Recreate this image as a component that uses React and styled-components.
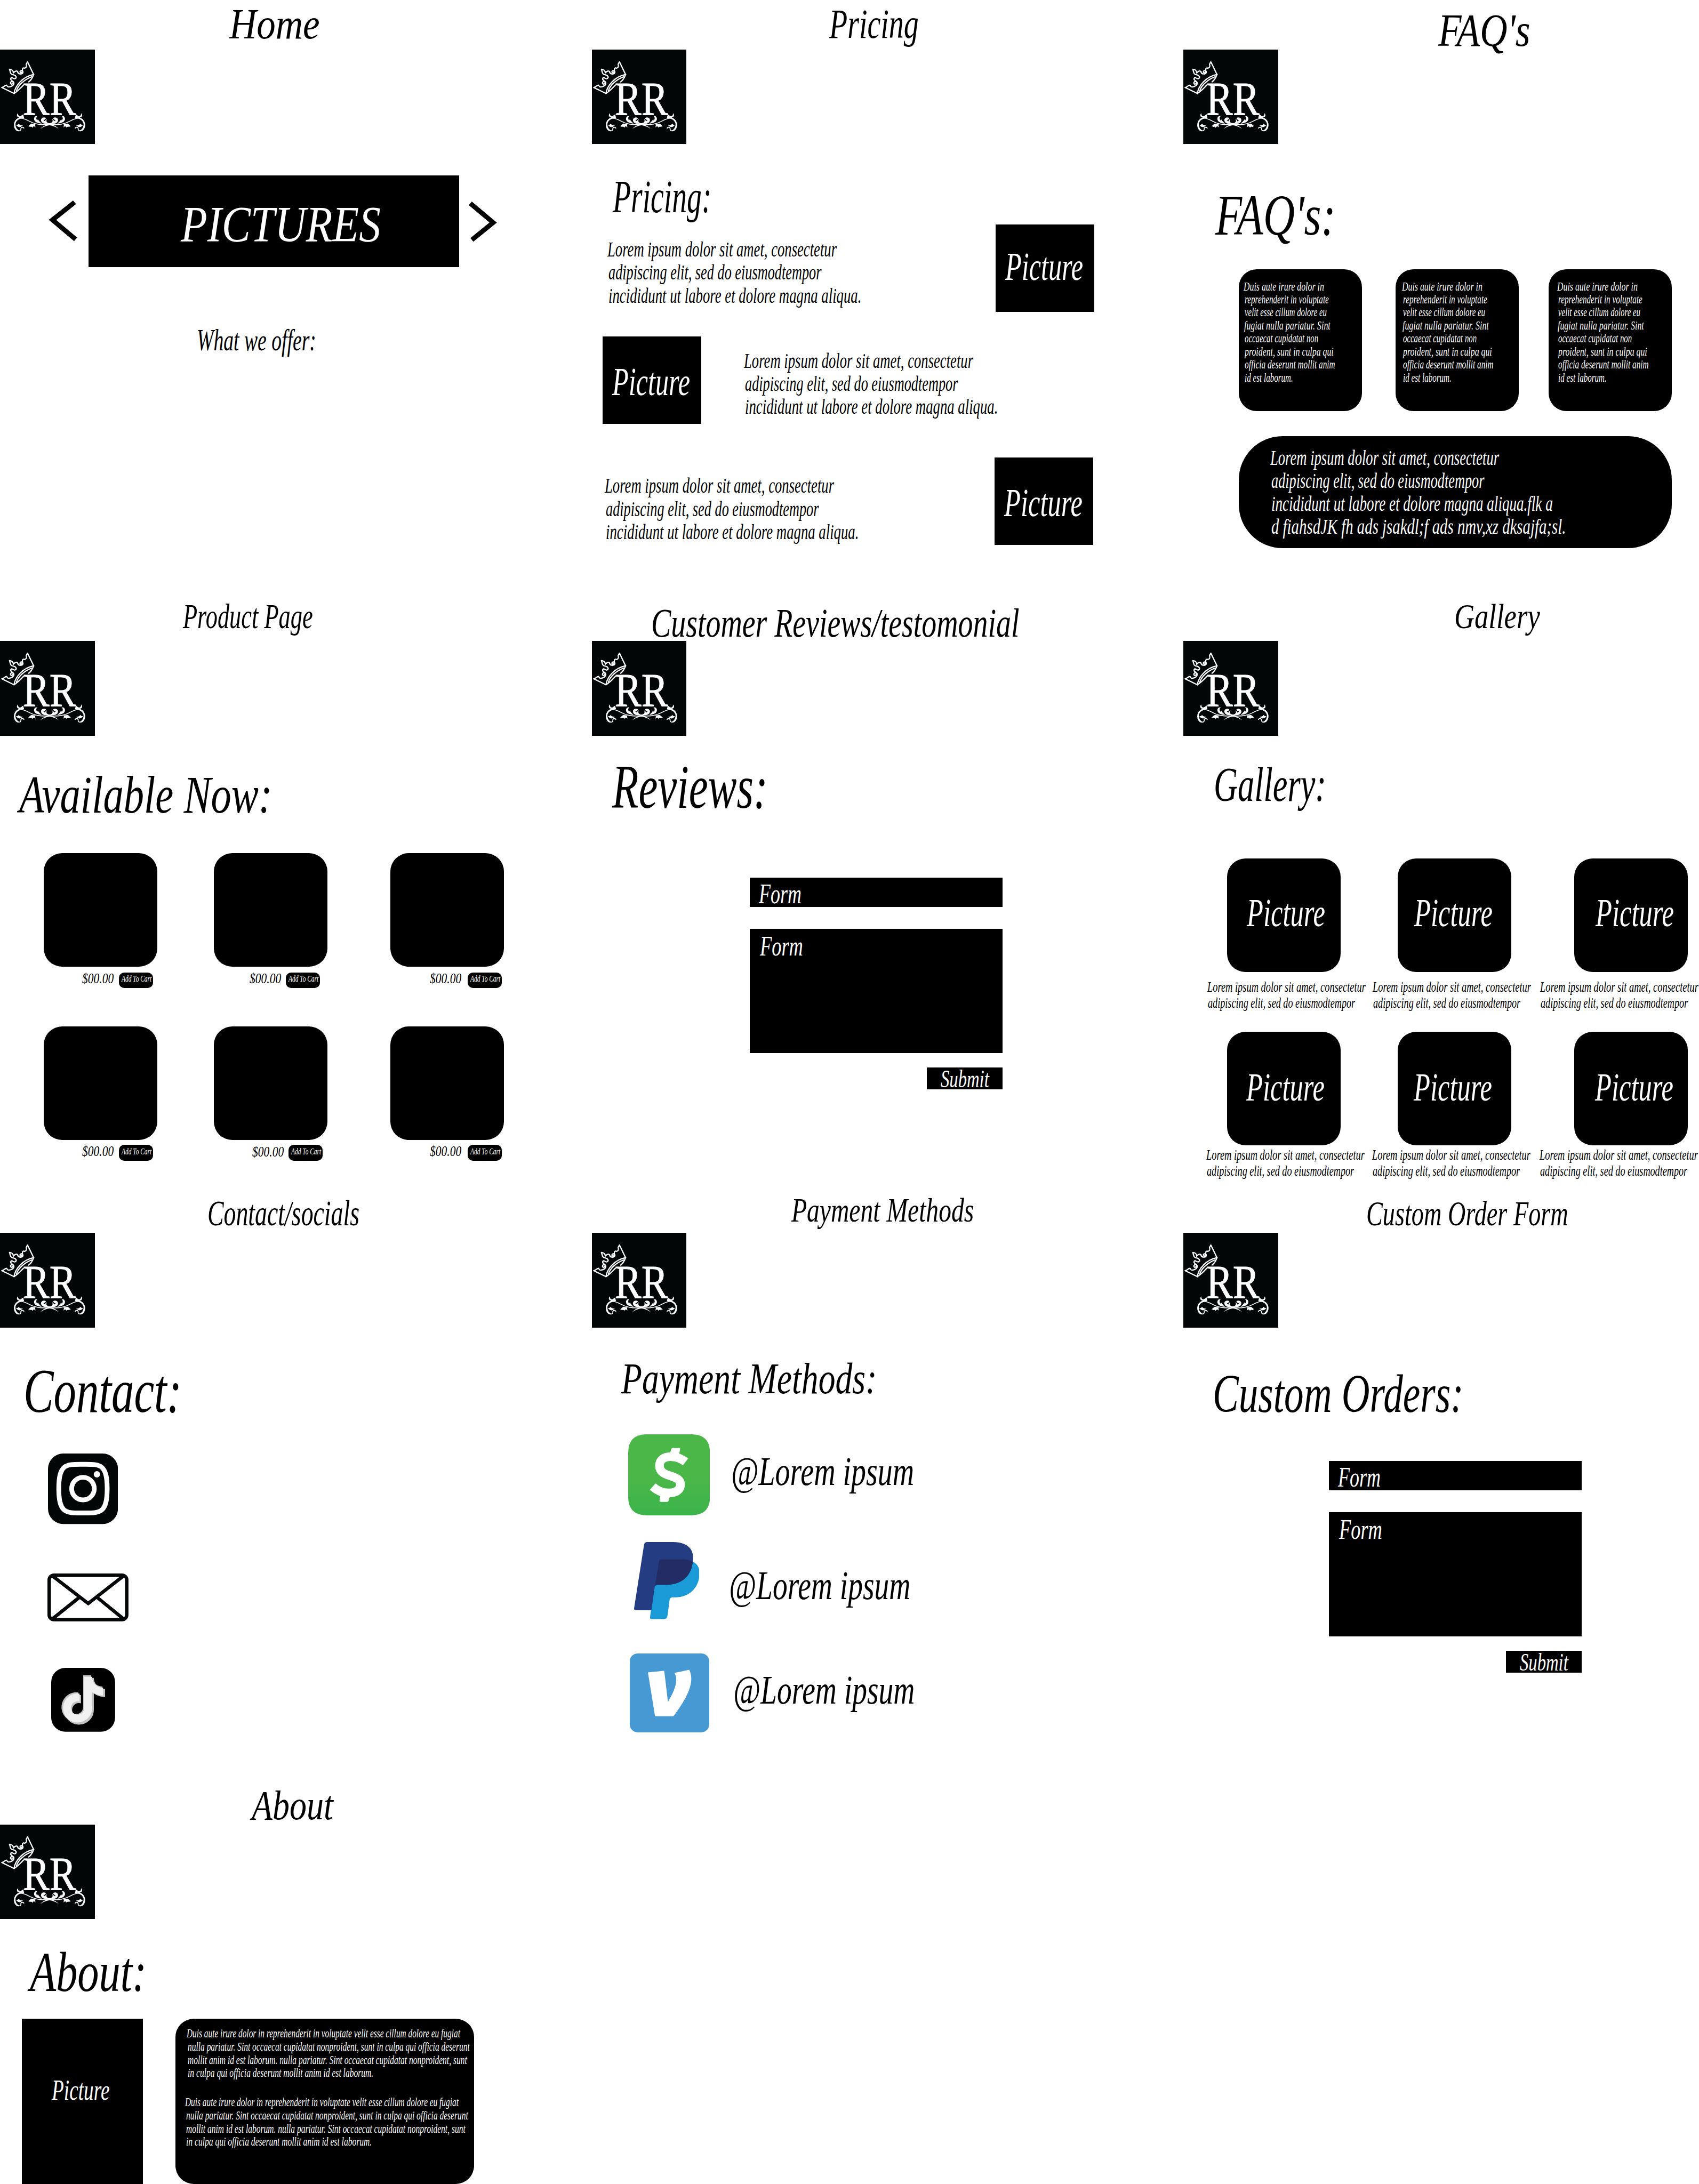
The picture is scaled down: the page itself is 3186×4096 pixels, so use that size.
import React, { useLayoutEffect, useRef, useState } from "react";
import styled, { createGlobalStyle } from "styled-components";

const SCALE = 3186 / 3230;
const u = (n) => `${(n * SCALE).toFixed(3)}px`;

const GlobalStyle = createGlobalStyle`
  html, body { margin: 0; padding: 0; background: #fff; }
  *, *::before, *::after { box-sizing: border-box; }
  h1, h2 { font-weight: 400; margin-bottom: 0; margin-right: 0; }
  button { border: 0; padding: 0; }
`;

/* ---------- lettering ---------- */

const Line = styled.div`
  flex: none;
  width: ${(p) => u(p.$w)};
  height: ${(p) => u(p.$lh)};
  margin-left: ${(p) => u(p.$x)};
  margin-top: ${(p) => u(p.$top)};
  font-family: "Liberation Serif", "Times New Roman", serif;
  font-style: italic;
  font-size: ${(p) => u(p.$size)};
  line-height: ${(p) => u(p.$lh)};
  white-space: nowrap;
`;

const Stretch = styled.span`
  display: inline-block;
  transform-origin: 0 50%;
`;

/* One line of lettering, condensed so that it spans exactly `w`.
   `base` is the distance from the container's edge to the baseline. */
function Script({ children, w, size, x = 0, base, lh = size, as }) {
  const ref = useRef(null);
  const [k, setK] = useState(1);
  useLayoutEffect(() => {
    const el = ref.current;
    el.style.transform = "none";
    const natural = el.getBoundingClientRect().width;
    const next = (w * SCALE) / natural;
    el.style.transform = `scaleX(${next})`;
    setK(next);
  }, [w, size, children]);
  const top = base === undefined ? 0 : base - lh / 2 - size * 0.3375;
  return (
    <Line as={as} $w={w} $size={size} $x={x} $top={top} $lh={lh}>
      <Stretch ref={ref} style={{ transform: `scaleX(${k})` }}>
        {children}
      </Stretch>
    </Line>
  );
}

const TextBlock = styled.div`
  display: flex;
  flex-direction: column;
  flex: none;
  margin-left: ${(p) => u(p.$x || 0)};
  padding-top: ${(p) => u(p.$top)};
  width: 0;
`;

function Paragraph({ lines, x, base, pitch, size }) {
  return (
    <TextBlock $x={x} $top={base - pitch / 2 - size * 0.3375}>
      {lines.map(([text, w, dx = 0], i) => (
        <Script key={i} w={w} x={dx} size={size} lh={pitch}>
          {text}
        </Script>
      ))}
    </TextBlock>
  );
}

/* ---------- page scaffolding ---------- */

const Sheet = styled.main`
  display: grid;
  grid-template-columns: ${u(1125)} ${u(1125)} ${u(980)};
  grid-template-rows: ${u(1125)} ${u(1125)} ${u(1125)} ${u(778)};
  width: 3186px;
  height: 4096px;
  overflow: hidden;
  background: #fff;
  color: #000;
`;

const Board = styled.section`
  display: flex;
  flex-direction: column;
  min-width: 0;
  min-height: 0;
`;

const TitleBar = styled.header`
  display: flex;
  align-items: flex-start;
  flex: none;
  height: ${u(94)};
`;

const HeadingArea = styled.div`
  display: flex;
  align-items: flex-start;
  flex: none;
  height: ${(p) => u(p.$h)};
`;

const LogoArt = styled.svg`
  display: block;
  flex: none;
  width: ${u(180)};
  height: ${u(180)};
  background: #020606;
`;

function Ornament() {
  return (
    <g>
      <path d="M137 462C134 452 121 453 119 462C122 480 96 481 86 461C75 436 87 410 110 404C128 401 148 410 166 420C194 436 224 443 284 440" fill="none" stroke="#fff" strokeWidth="5" />
      <path d="M118 476C98 481 82 463 82 442C82 420 93 406 111 400C94 397 93 383 103 375C101 389 111 395 120 390C126 386 129 383 134 380C131 392 141 396 135 403C122 403 96 409 89 432C85 452 98 474 118 476Z" />
      <path d="M91 441C100 442 104 439 107 434C111 443 120 443 131 446C122 449 117 456 108 454C102 452 97 449 91 441Z" />
      <path d="M160 449C168 446 172 436 181 434C188 434 190 438 204 436C197 441 203 447 202 456C194 448 190 448 184 459C183 451 176 450 170 454C169 449 165 449 160 449Z" />
      <path d="M214 391C199 389 192 400 195 413C199 427 218 433 238 434C219 425 206 414 207 402C208 397 210 394 214 391Z" />
      <path d="M216 410C208 420 214 429 238 434C230 427 223 422 216 410Z" />
      <path d="M262 402C245 394 230 405 235 420C242 439 265 432 282 440C269 425 252 421 247 413C254 414 260 410 262 402Z" />
      <path d="M268 408C259 424 270 431 284 432L284 439C258 434 248 418 268 408Z" />
      <path d="M230 464C246 447 260 442 284 436L284 443C261 447 250 452 230 464Z" />
    </g>
  );
}

function Logo() {
  return (
    <LogoArt viewBox="0 12 540 540" role="img" aria-label="RR">
      <g fill="none" stroke="#fff" strokeWidth="7" strokeLinejoin="round" strokeLinecap="round">
        <path d="M80 262L10 228C26 226 23 216 38 215C42 219 40 225 50 225C66 225 80 214 79 203C77 190 60 192 60 203C62 212 73 210 74 202" />
        <path d="M79 203C76 186 56 190 62 175C68 165 74 181 86 178C98 172 92 160 78 156C56 155 60 138 54 124C66 125 77 132 76 145C86 133 96 131 101 139" />
        <path d="M101 139C103 153 127 156 131 142C131 129 114 129 114 140C117 147 126 145 126 138M131 142C124 126 128 112 140 118C149 118 154 105 150 100C147 92 153 93 157 82L192 154" />
        <path d="M80 262C86 218 130 166 192 154" />
        <path d="M94 247C104 212 143 181 181 167" />
        <path d="M80 262C104 248 118 230 134 214M164 196C176 188 186 171 192 154" />
      </g>
      <g fill="#fff" stroke="#fff" strokeWidth="2.500" fontFamily="'Liberation Serif', serif" fontSize="272">
        <text transform="translate(130 382) scale(.84 1)">R</text>
        <text transform="translate(282 382) scale(.84 1)">R</text>
      </g>
      <g fill="#fff">
        <Ornament />
        <g transform="matrix(-1 0 0 1 565 0)">
          <Ornament />
        </g>
      </g>
    </LogoArt>
  );
}

function Page({ title, titleX, titleW, titleBase, titleSize, heading, children }) {
  return (
    <Board>
      <TitleBar>
        <Script as="h1" x={titleX} w={titleW} base={titleBase} size={titleSize}>
          {title}
        </Script>
      </TitleBar>
      <Logo />
      {heading && (
        <HeadingArea $h={heading.end - 274}>
          <Script as="h2" x={heading.x} w={heading.w} base={heading.base - 274} size={heading.size}>
            {heading.text}
          </Script>
        </HeadingArea>
      )}
      {children}
    </Board>
  );
}

const Box = styled.div`
  display: flex;
  align-items: flex-start;
  flex: none;
  width: ${(p) => u(p.$w)};
  height: ${(p) => u(p.$h)};
  margin-left: ${(p) => u(p.$x || 0)};
  margin-top: ${(p) => u(p.$y || 0)};
  border-radius: ${(p) => u(p.$r || 0)};
  background: #000;
  color: #fff;
`;

const Row = styled.div`
  display: flex;
  align-items: flex-start;
  flex: none;
  height: ${(p) => u(p.$h)};
`;

/* ---------- home ---------- */

const Carousel = styled.div`
  display: flex;
  align-items: flex-start;
  margin: ${u(60)} 0 0 ${u(90)};
  height: ${u(174)};
  flex: none;
`;

const Chevron = styled.svg`
  display: block;
  flex: none;
  width: ${u(60)};
  height: ${u(90)};
  margin: ${(p) => p.$m};
  fill: none;
  stroke: #000;
  stroke-width: 9;
`;

function Home() {
  return (
    <Page title="Home" titleX={436} titleW={172} titleBase={73.5} titleSize={81}>
      <Carousel>
        <Chevron viewBox="90 375 60 90" $m={`${u(41)} ${u(18)} 0 0`}>
          <path d="M141.500 384.500L99.500 418L143.500 455" />
        </Chevron>
        <Box $w={705} $h={174}>
          <Script x={176} w={380} base={126} size={96}>PICTURES</Script>
        </Box>
        <Chevron viewBox="887 375 60 90" $m={`${u(41)} 0 0 ${u(14)}`}>
          <path d="M894 386.500L937.500 423L897 456" />
        </Chevron>
      </Carousel>
      <Script x={374} w={227} base={158} size={58}>What we offer:</Script>
    </Page>
  );
}

/* ---------- pricing ---------- */

const loremA = "Lorem ipsum dolor sit amet, consectetur";
const loremB = "adipiscing elit, sed do eiusmodtempor";
const loremC = "incididunt ut labore et dolore magna aliqua.";
const priceLines = [[loremA, 436], [loremB, 405, 2], [loremC, 481, 2]];

function Pricing() {
  return (
    <Page
      title="Pricing" titleX={451} titleW={170} titleBase={73.5} titleSize={80}
      heading={{ text: "Pricing:", x: 40, w: 188, base: 404, size: 88, end: 427 }}
    >
      <Row $h={213}>
        <Paragraph lines={priceLines} x={30} base={61} pitch={44} size={41} />
        <Box $x={738} $w={187} $h={166}>
          <Script x={18} w={148} base={105} size={74}>Picture</Script>
        </Box>
      </Row>
      <Row $h={230}>
        <Box $x={21} $w={187} $h={166}>
          <Script x={18} w={148} base={111} size={74}>Picture</Script>
        </Box>
        <Paragraph lines={priceLines} x={81} base={59.5} pitch={44} size={41} />
      </Row>
      <Row $h={166}>
        <Paragraph lines={priceLines} x={25} base={67.5} pitch={44} size={41} />
        <Box $x={741} $w={187} $h={166}>
          <Script x={18} w={149} base={112} size={74}>Picture</Script>
        </Box>
      </Row>
    </Page>
  );
}

/* ---------- faq ---------- */

const FaqCards = styled.div`
  display: grid;
  grid-template-columns: ${u(298.5)} ${u(290.5)} ${u(234)};
  padding-left: ${u(105)};
  height: ${u(317)};
  flex: none;
`;

const duis = [
  ["Duis aute irure dolor in", 153],
  ["reprehenderit in voluptate", 160, 2],
  ["velit esse cillum dolore eu", 156, 2],
  ["fugiat nulla pariatur. Sint", 164, 1],
  ["occaecat cupidatat non", 140, 2],
  ["proident, sunt in culpa qui", 169, 2],
  ["officia deserunt mollit anim", 172, 2],
  ["id est laborum.", 92, 2],
];

function Faq() {
  return (
    <Page
      title="FAQ's" titleX={484} titleW={175} titleBase={88} titleSize={88}
      heading={{ text: "FAQ's:", x: 60, w: 229, base: 446, size: 110, end: 512 }}
    >
      <FaqCards>
        {[9.5, 12, 16.5].map((x) => (
          <Box key={x} $w={234} $h={270} $r={34}>
            <Paragraph lines={duis} x={x} base={41} pitch={24.8} size={23} />
          </Box>
        ))}
      </FaqCards>
      <Box $x={105} $w={823} $h={213} $r={83}>
        <Paragraph
          x={59.5} base={56} pitch={43.5} size={41}
          lines={[
            [loremA, 435],
            [loremB, 405, 2],
            ["incididunt ut labore et dolore magna aliqua.flk a", 535, 2],
            ["d fiahsdJK fh ads jsakdl;f ads nmv,xz dksajfa;sl.", 560, 2],
          ]}
        />
      </Box>
    </Page>
  );
}

/* ---------- products ---------- */

const CardGrid = styled.div`
  display: grid;
  grid-template-columns: ${u(324)} ${u(335.5)} ${u(216)};
  grid-template-rows: ${u(330)} ${u(250)};
  padding-left: ${u(83)};
  flex: none;
`;

const Cell = styled.div`
  display: flex;
  flex-direction: column;
  min-width: 0;
`;

const products = [
  { price: 73, gap: 10, top: 11, base: 32 },
  { price: 67, gap: 9.5, top: 11, base: 32 },
  { price: 75, gap: 11.5, top: 11, base: 32 },
  { price: 73, gap: 10, top: 9, base: 30.5 },
  { price: 73, gap: 8, top: 9, base: 31 },
  { price: 75, gap: 11.5, top: 9, base: 30.5 },
];

function ProductPage() {
  return (
    <Page
      title="Product Page" titleX={348} titleW={247} titleBase={70} titleSize={66}
      heading={{ text: "Available Now:", x: 36, w: 481, base: 421, size: 100, end: 497 }}
    >
      <CardGrid>
        {products.map((p, i) => (
          <Cell key={i}>
            <Box $w={216} $h={216} $r={35} />
            <Row $h={44}>
              <Script x={p.price} w={60} base={p.base} size={27}>$00.00</Script>
              <Box as="button" type="button" $x={p.gap} $y={p.top} $w={65} $h={30} $r={10}>
                <Script x={5.5} w={57} base={19} size={17}>Add To Cart</Script>
              </Box>
            </Row>
          </Cell>
        ))}
      </CardGrid>
    </Page>
  );
}

/* ---------- forms ---------- */

const Form = styled.form`
  display: flex;
  flex-direction: column;
  flex: none;
  width: ${u(481)};
  margin-left: ${(p) => u(p.$x)};
`;

function MessageForm({ x }) {
  return (
    <Form $x={x}>
      <Box $w={481} $h={55.5}>
        <Script x={18} w={81} base={48} size={53}>Form</Script>
      </Box>
      <Box $y={41.5} $w={481} $h={236.5}>
        <Script x={20} w={82} base={51} size={53}>Form</Script>
      </Box>
      <Box as="button" type="button" $x={337} $y={27} $w={144} $h={42}>
        <Script x={26} w={92} base={38.5} size={48}>Submit</Script>
      </Box>
    </Form>
  );
}

function Reviews() {
  return (
    <Page
      title="Customer Reviews/testomonial" titleX={113} titleW={700} titleBase={85.5} titleSize={78}
      heading={{ text: "Reviews:", x: 39, w: 296, base: 411, size: 118, end: 544 }}
    >
      <MessageForm x={300} />
    </Page>
  );
}

function CustomOrders() {
  return (
    <Page
      title="Custom Order Form" titleX={347} titleW={384} titleBase={80} titleSize={66}
      heading={{ text: "Custom Orders:", x: 55, w: 477, base: 435, size: 104, end: 528 }}
    >
      <MessageForm x={276} />
    </Page>
  );
}

/* ---------- gallery ---------- */

const gallery = [
  { pic: 37, base: 129, cap: -38, capBase: 38 },
  { pic: 32, base: 129, cap: -47, capBase: 38 },
  { pic: 41, base: 129, cap: -65, capBase: 38 },
  { pic: 36, base: 131, cap: -40, capBase: 27.5 },
  { pic: 31, base: 131, cap: -48, capBase: 27.5 },
  { pic: 39.5, base: 131, cap: -66, capBase: 27.5 },
];

function Gallery() {
  return (
    <Page
      title="Gallery" titleX={515} titleW={163} titleBase={69.5} titleSize={66}
      heading={{ text: "Gallery:", x: 57, w: 214, base: 399, size: 92, end: 507 }}
    >
      <CardGrid>
        {gallery.map((g, i) => (
          <Cell key={i}>
            <Box $w={216} $h={216} $r={35}>
              <Script x={g.pic} w={149} base={g.base} size={74}>Picture</Script>
            </Box>
            <Paragraph
              x={g.cap} base={g.capBase} pitch={30.2} size={28}
              lines={[[loremA, 301], [loremB, 280, 1]]}
            />
          </Cell>
        ))}
      </CardGrid>
    </Page>
  );
}

/* ---------- contact ---------- */

const Icon = styled.svg`
  display: block;
  flex: none;
  width: ${(p) => u(p.$w)};
  height: ${(p) => u(p.$h)};
  margin-left: ${(p) => u(p.$x)};
  margin-top: ${(p) => u(p.$y || 0)};
`;

const tiktokNote =
  "M448 209.910a210.060 210.060 0 0 1-122.770-39.250V349.380A162.550 162.550 0 1 1 185 188.310V278.200a74.620 74.620 0 1 0 52.230 71.180V0h88a121.180 121.180 0 0 0 1.860 22.170A122.180 122.180 0 0 0 381 102.390a121.430 121.430 0 0 0 67 20.140Z";

function Contact() {
  return (
    <Page
      title="Contact/socials" titleX={394} titleW={289} titleBase={80} titleSize={68}
      heading={{ text: "Contact:", x: 45, w: 301, base: 435, size: 118, end: 514 }}
    >
      <Icon viewBox="0 0 133 134" $w={133} $h={134} $x={91}>
        <rect width="133" height="134" rx="29" fill="#020606" />
        <path d="M66.500 20.500C98 20.500 112.500 18.500 112.500 66.800S98 113 66.500 113S20.500 115 20.500 66.800S35 20.500 66.500 20.500Z" fill="none" stroke="#fff" strokeWidth="9" />
        <circle cx="66.500" cy="66.700" r="21.500" fill="none" stroke="#fff" strokeWidth="9" />
        <circle cx="93" cy="39.500" r="6" fill="#fff" />
      </Icon>
      <Icon viewBox="0 0 154 91" $w={154} $h={91} $x={90} $y={94}>
        <g fill="none" stroke="#020606" strokeWidth="6.500">
          <rect x="3.250" y="3.250" width="147.500" height="84.500" rx="9" />
          <path d="M10 5L77.500 57L144 5" />
          <path d="M10 86L60.500 45.500M144 86L94.500 45.500" />
        </g>
      </Icon>
      <Icon viewBox="0 0 121.500 121.500" $w={121.5} $h={121.5} $x={97} $y={88}>
        <rect width="121.500" height="121.500" rx="27" fill="#000" />
        <g fill="#c2c2c4">
          <path transform="translate(19.500 14) scale(.1740 .1740)" d={tiktokNote} />
          <path transform="translate(24.500 19) scale(.1740 .1740)" d={tiktokNote} />
        </g>
        <path transform="translate(22.500 17) scale(.1700 .1700)" d={tiktokNote} fill="#f0f0f0" />
      </Icon>
    </Page>
  );
}

/* ---------- payment ---------- */

function Payment() {
  return (
    <Page
      title="Payment Methods" titleX={379} titleW={347} titleBase={74} titleSize={64}
      heading={{ text: "Payment Methods:", x: 56, w: 486, base: 399, size: 84, end: 477 }}
    >
      <Row $h={205}>
        <Icon viewBox="0 0 155.500 154" $w={155.5} $h={154} $x={69}>
          <defs>
            <linearGradient id="cash" x1="0" y1="0" x2="0" y2="1">
              <stop offset=".500" stopColor="#4cb749" />
              <stop offset="1" stopColor="#3bb44b" />
            </linearGradient>
          </defs>
          <path d="M35 0H120Q155.500 0 155.500 35V119Q155.500 154 120 154H35Q0 154 0 119V35Q0 0 35 0Z" fill="url(#cash)" />
          <path d="M109 52.500C100 45.500 92 42.500 81 42.500C68 42.500 59.500 49 59.500 59.500C59.500 84 99.500 75 99.500 95C99.500 106.500 90 111.500 76 111.500C65 111.500 55 107 46.500 99.500" fill="none" stroke="#fff" strokeWidth="16.500" strokeLinejoin="round" />
          <path d="M79 38L82 28Q82.500 26 85 26H97Q99 26 98.600 28L96.500 41ZM61.500 115L59.500 126Q59.500 128.500 62 128.500H74Q76.500 128.500 77 126L80 115Z" fill="#fff" />
        </Icon>
        <Script x={40} w={348} base={97} size={78}>@Lorem ipsum</Script>
      </Row>
      <Row $h={212}>
        <Icon viewBox="155 986 184 209" preserveAspectRatio="none" $w={124.4} $h={146.6} $x={80}>
          <path d="M232 1033H290Q312 1033 321 1040Q339 1048 339 1070C339 1110 310 1136 270 1136H262Q256 1137 255 1142L249 1186Q247 1195 240 1195H204Q199 1195 200 1189L214 1090Z" fill="#1a9bd8" />
          <path d="M192 986H265C303 987 321 1003 321 1028C321 1075 290 1102 245 1102H220Q214 1103 213 1108L204 1171H159Q155 1171 155 1166L183 994Q184 986 192 986Z" fill="#233c82" />
          <path d="M232 1033H290Q310 1033 320 1040C316 1080 288 1102 245 1102H220Q216 1102 214 1106L225 1038Q226 1033 232 1033Z" fill="#232c65" />
        </Icon>
        <Script x={56} w={345} base={109} size={78}>@Lorem ipsum</Script>
      </Row>
      <Row $h={150}>
        <Icon viewBox="0 0 151 150" $w={151} $h={150} $x={72}>
          <rect width="151" height="150" rx="15" fill="#4799d4" />
          <path d="M34.500 36L65.500 33L72.500 92C84 73 93.500 52 85 37L113 31C126 57 104 91 83 119.500H48Z" fill="#fff" />
        </Icon>
        <Script x={46} w={345} base={96} size={78}>@Lorem ipsum</Script>
      </Row>
    </Page>
  );
}

/* ---------- about ---------- */

const aboutLines = [
  ["Duis aute irure dolor in reprehenderit in voluptate velit esse cillum dolore eu fugiat", 520],
  ["nulla pariatur. Sint occaecat cupidatat nonproident, sunt in culpa qui officia deserunt", 536, 2],
  ["mollit anim id est laborum. nulla pariatur. Sint occaecat cupidatat nonproident, sunt", 531, 2],
  ["in culpa qui officia deserunt mollit anim id est laborum.", 353, 2],
];

const AboutPanel = styled(Box)`
  flex-direction: column;
`;

function About() {
  return (
    <Page
      title="About" titleX={479} titleW={155} titleBase={85} titleSize={80}
      heading={{ text: "About:", x: 57, w: 222, base: 411, size: 108, end: 463.5 }}
    >
      <Row $h={314}>
        <Box $x={42} $w={230} $h={314}>
          <Script x={56} w={110} base={154} size={56}>Picture</Script>
        </Box>
        <AboutPanel $x={61.5} $w={568} $h={314} $r={35}>
          <Paragraph lines={aboutLines} x={21} base={36} pitch={25} size={24} />
          <Paragraph lines={aboutLines} x={18.5} base={51.5} pitch={25} size={24} />
        </AboutPanel>
      </Row>
    </Page>
  );
}

export default function App() {
  return (
    <>
      <GlobalStyle />
      <Sheet>
        <Home />
        <Pricing />
        <Faq />
        <ProductPage />
        <Reviews />
        <Gallery />
        <Contact />
        <Payment />
        <CustomOrders />
        <About />
      </Sheet>
    </>
  );
}
